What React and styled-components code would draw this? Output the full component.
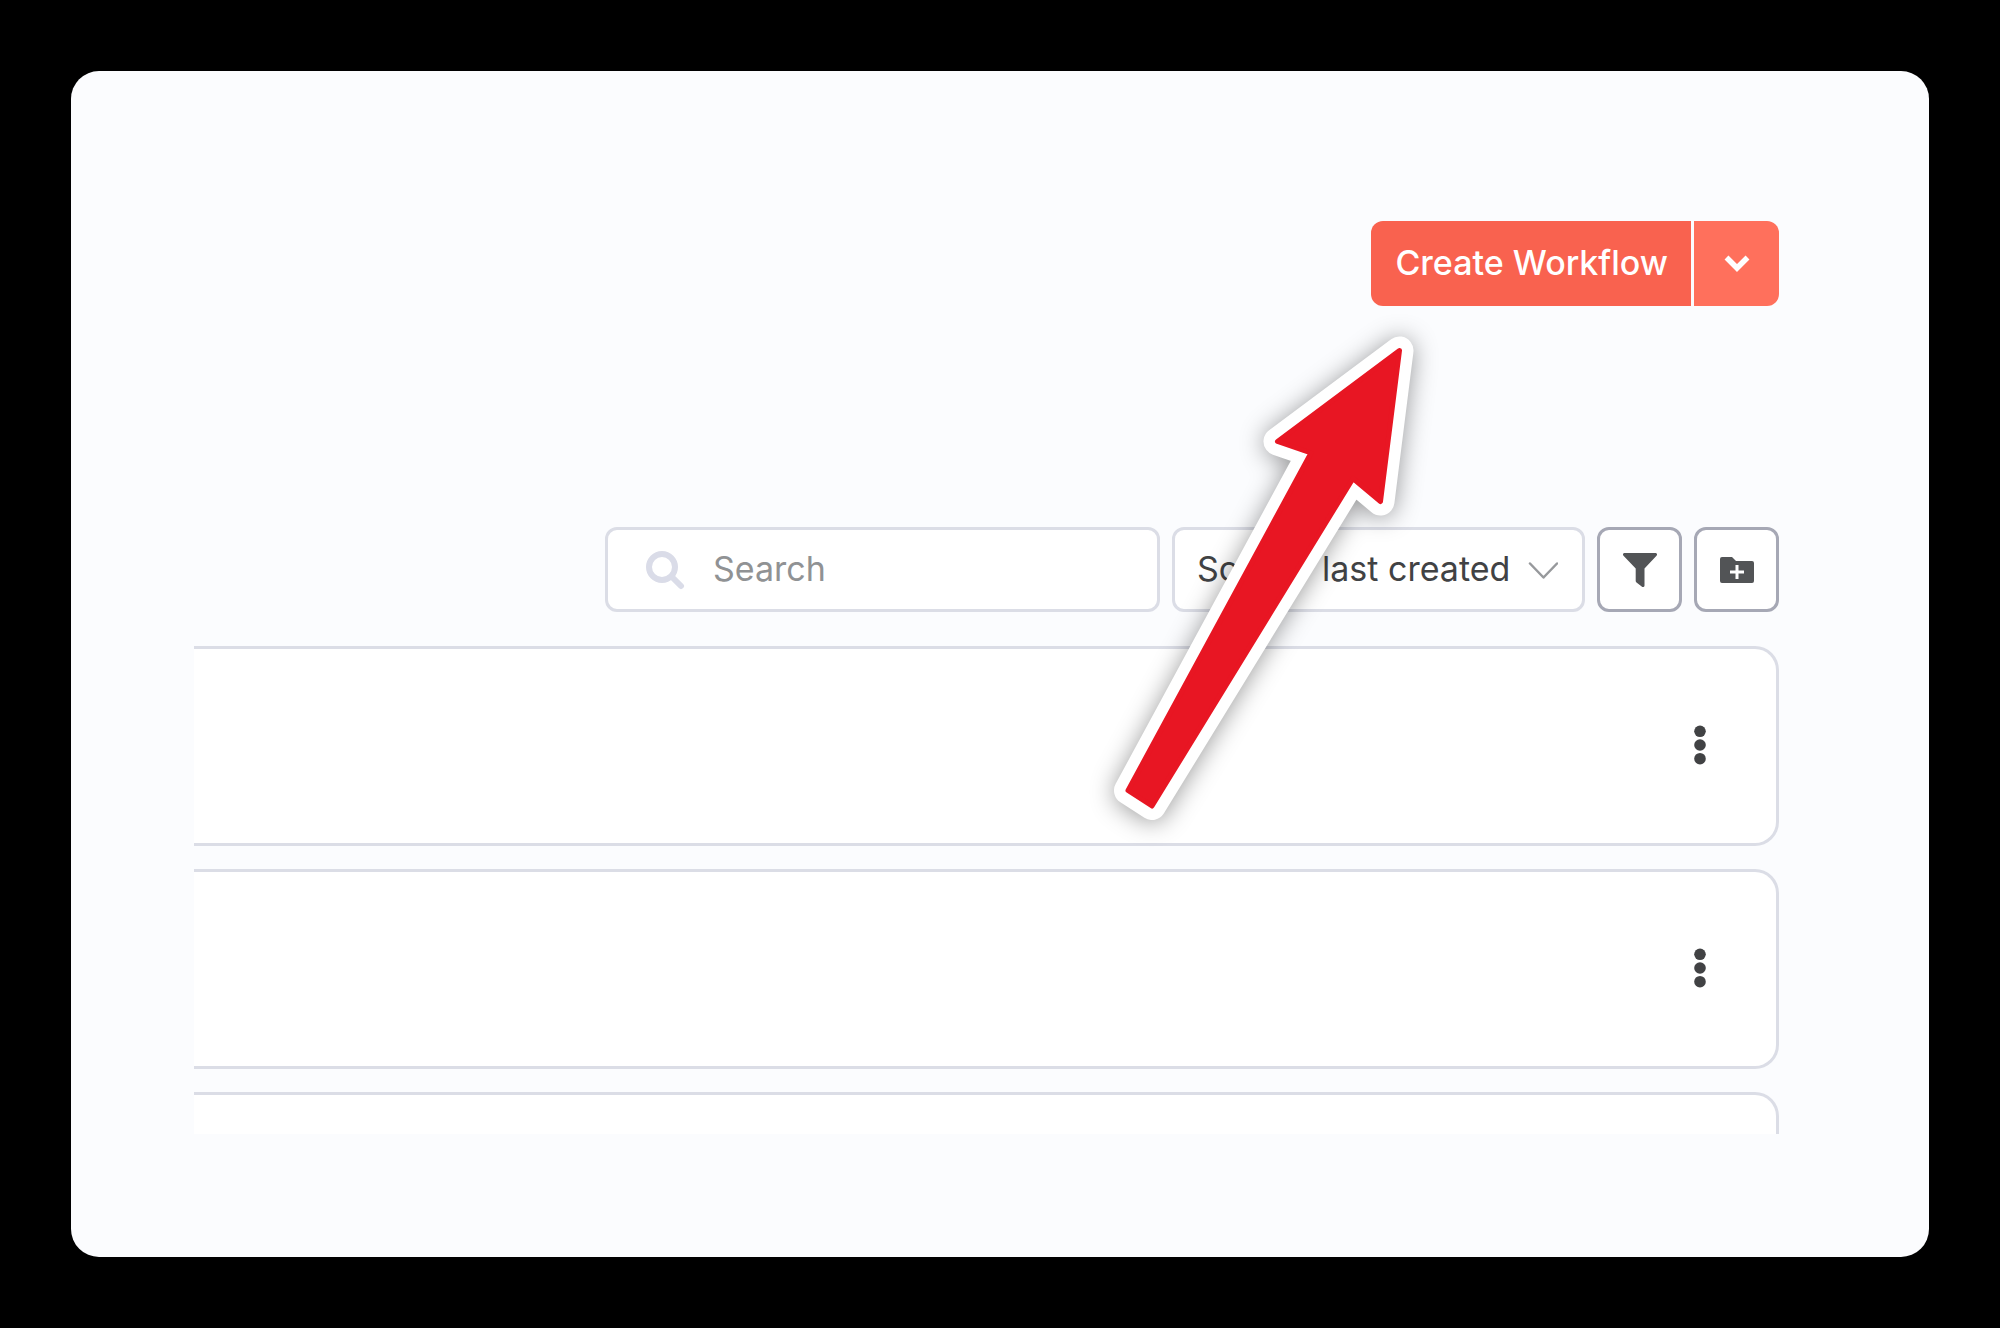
import { useState } from "react";
import styled, { createGlobalStyle } from "styled-components";

const GlobalStyle = createGlobalStyle`
  *, *::before, *::after {
    box-sizing: border-box;
  }
  body {
    margin: 0;
    background-color: #000;
    font-family: Inter, "Liberation Sans", sans-serif;
    color: #414244;
  }
  button, input, select {
    font: inherit;
    color: inherit;
  }
`;

const Page = styled.div`
  height: 100vh;
  padding: 71px;
`;

const Panel = styled.main`
  position: relative;
  display: flex;
  flex-direction: column;
  height: 100%;
  padding: 150px 150px 123px 123px;
  border-radius: 28px;
  background-color: #fbfcfe;
`;

const Header = styled.header`
  display: flex;
  justify-content: flex-end;
  margin-bottom: 221px;
`;

const SplitButton = styled.div`
  display: flex;
  gap: 3px;
  height: 85px;
`;

const CreateButton = styled.button`
  padding: 0 23px 2px 24px;
  border: 0;
  border-radius: 12px 0 0 12px;
  background-color: #f9624f;
  color: #fff;
  font-size: 34px;
  font-weight: 500;
  cursor: pointer;
`;

const CreateMenuButton = styled.button`
  display: grid;
  place-content: center;
  width: 85px;
  padding: 0 0 2px;
  border: 0;
  border-radius: 0 12px 12px 0;
  background-color: #ff705c;
  color: #fff;
  cursor: pointer;
`;

const Toolbar = styled.div`
  display: flex;
  justify-content: flex-end;
  gap: 12px;
  height: 85px;
  margin-bottom: 34px;
`;

const SearchBox = styled.label`
  display: flex;
  align-items: center;
  gap: 28px;
  width: 555px;
  padding: 0 24px 0 37px;
  border: 3px solid #dbdde6;
  border-radius: 12px;
  background-color: #fff;
  color: #dadce8;
`;

const SearchInput = styled.input`
  flex: 1;
  min-width: 0;
  padding: 0 0 2px;
  border: 0;
  outline: 0;
  background: transparent;
  color: #414244;
  font-size: 34px;
  &::placeholder {
    color: #909294;
    opacity: 1;
  }
`;

const SortBox = styled.label`
  display: grid;
  grid-template-columns: 1fr 30px;
  align-items: center;
  width: 413px;
  padding-right: 24px;
  border: 3px solid #dbdde6;
  border-radius: 12px;
  background-color: #fff;
  svg {
    grid-area: 1 / 2;
    pointer-events: none;
  }
`;

const SortSelect = styled.select`
  grid-area: 1 / 1 / 2 / 3;
  height: 100%;
  padding: 0 0 2px 22px;
  border: 0;
  outline: 0;
  appearance: none;
  background: transparent;
  font-size: 34px;
  cursor: pointer;
`;

const IconButton = styled.button`
  display: grid;
  place-content: center;
  width: 85px;
  padding: 0;
  border: 3px solid #a6a8b5;
  border-radius: 12px;
  background-color: #fff;
  color: #525456;
  cursor: pointer;
`;

const WorkflowList = styled.ul`
  flex: 1;
  min-height: 0;
  margin: 0;
  padding: 0;
  overflow: hidden;
  list-style: none;
`;

const WorkflowCard = styled.li`
  display: flex;
  align-items: center;
  justify-content: flex-end;
  height: 200px;
  margin-bottom: 23px;
  padding-right: 55px;
  border: 3px solid #dbdde6;
  border-left: 0;
  border-radius: 0 24px 24px 0;
  background-color: #fff;
`;

const MoreButton = styled.button`
  display: grid;
  place-content: center;
  width: 42px;
  height: 60px;
  padding: 0 0 2px;
  border: 0;
  background: transparent;
  color: #414244;
  cursor: pointer;
`;

// Sits on top of the page, pinned to the create button corner
const Arrow = styled.svg`
  position: absolute;
  top: 229px;
  right: 489px;
  overflow: visible;
  pointer-events: none;
  filter: drop-shadow(0 2px 12px rgba(0, 0, 0, 0.4));
`;

const arrowPath =
  "M299.500 50.500 L177.500 141.500 L211 153 L28 490.500 L52 506 L253 178.500 L280.500 201.500 Z";

const ChevronIcon = () => (
  <svg width="26" height="18" viewBox="0 0 26 18" aria-hidden="true">
    <path
      d="M2.500 3.500 L13 14 L23.500 3.500"
      fill="none"
      stroke="currentColor"
      strokeWidth="5.500"
    />
  </svg>
);

const SearchIcon = () => (
  <svg width="40" height="40" viewBox="0 0 40 40" aria-hidden="true">
    <g fill="none" stroke="currentColor" strokeWidth="6">
      <circle cx="17" cy="17" r="13" />
      <path d="M27 27 L36 36" strokeLinecap="round" />
    </g>
  </svg>
);

const ThinChevronIcon = () => (
  <svg width="30" height="20" viewBox="0 0 30 20" aria-hidden="true">
    <path
      d="M2 3.500 L15.500 17.500 L29 3.500"
      fill="none"
      stroke="#97999c"
      strokeWidth="2.500"
      strokeLinecap="round"
      strokeLinejoin="round"
    />
  </svg>
);

const FilterIcon = () => (
  <svg width="34" height="34" viewBox="0 0 34 34" aria-hidden="true">
    <path
      d="M1.500 0 H32.500 C34 0 34.500 1.800 33.500 2.800 L21.500 15.500 V32.500 C21.500 34 20 34.500 19 33.700 L13.500 29.500 C13 29 12.700 28.500 12.700 28 V15.500 L0.500 2.800 C-0.500 1.800 0 0 1.500 0 Z"
      fill="currentColor"
    />
  </svg>
);

const FolderPlusIcon = () => (
  <svg width="34" height="26" viewBox="0 0 34 26" aria-hidden="true">
    <path
      d="M2 0 H12 L16 4 H32 A2 2 0 0 1 34 6 V24 A2 2 0 0 1 32 26 H2 A2 2 0 0 1 0 24 V2 A2 2 0 0 1 2 0 Z"
      fill="currentColor"
    />
    <path d="M17 8 V22 M10 15 H24" stroke="#fff" strokeWidth="3" />
  </svg>
);

const DotsIcon = () => (
  <svg width="12" height="40" viewBox="0 0 12 40" aria-hidden="true">
    <g fill="currentColor">
      <circle cx="6" cy="6.300" r="5.800" />
      <circle cx="6" cy="20" r="5.800" />
      <circle cx="6" cy="33.700" r="5.800" />
    </g>
  </svg>
);

const workflows = [1, 2, 3];

export default function App() {
  const [search, setSearch] = useState("");

  return (
    <>
      <GlobalStyle />
      <Page>
        <Panel>
          <Header>
            <SplitButton>
              <CreateButton type="button">Create Workflow</CreateButton>
              <CreateMenuButton type="button" aria-label="More create options">
                <ChevronIcon />
              </CreateMenuButton>
            </SplitButton>
          </Header>

          <Toolbar>
            <SearchBox>
              <SearchIcon />
              <SearchInput
                type="text"
                placeholder="Search"
                aria-label="Search"
                value={search}
                onChange={(e) => setSearch(e.target.value)}
              />
            </SearchBox>
            <SortBox>
              <SortSelect aria-label="Sort workflows">
                <option>Sort by last created</option>
              </SortSelect>
              <ThinChevronIcon />
            </SortBox>
            <IconButton type="button" aria-label="Filter">
              <FilterIcon />
            </IconButton>
            <IconButton type="button" aria-label="Create folder">
              <FolderPlusIcon />
            </IconButton>
          </Toolbar>

          <WorkflowList>
            {workflows.map((id) => (
              <WorkflowCard key={id}>
                <MoreButton type="button" aria-label="Workflow actions">
                  <DotsIcon />
                </MoreButton>
              </WorkflowCard>
            ))}
          </WorkflowList>

          <Arrow width="340" height="520" viewBox="0 0 340 520" aria-hidden="true">
            <path
              d={arrowPath}
              fill="#fff"
              stroke="#fff"
              strokeWidth="28"
              strokeLinejoin="round"
            />
            <path
              d={arrowPath}
              fill="#e81623"
              stroke="#e81623"
              strokeWidth="5"
              strokeLinejoin="round"
            />
          </Arrow>
        </Panel>
      </Page>
    </>
  );
}
